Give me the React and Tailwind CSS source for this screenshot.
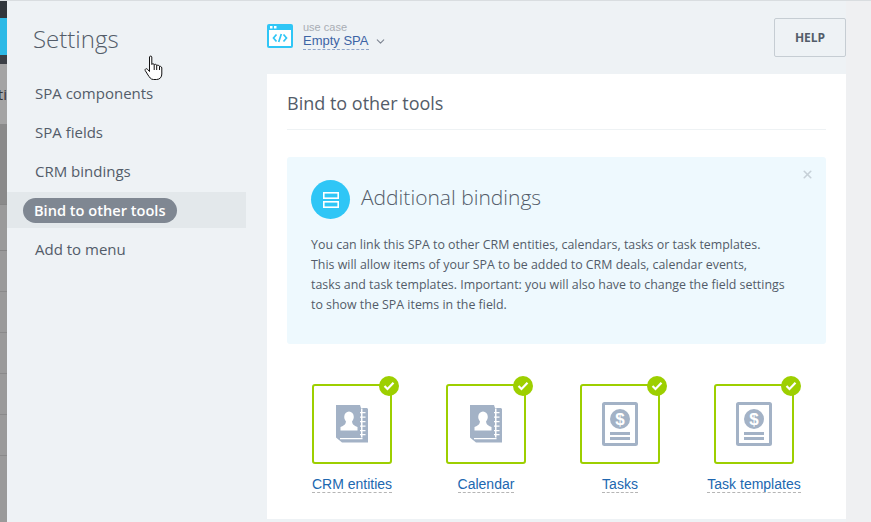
import { ChevronDown, X } from "lucide-react"

const menuItems = ["SPA components", "SPA fields", "CRM bindings", "Bind to other tools", "Add to menu"]

const tools = [
  { label: "CRM entities", icon: "book" },
  { label: "Calendar", icon: "book" },
  { label: "Tasks", icon: "invoice" },
  { label: "Task templates", icon: "invoice" },
]

function BookIcon() {
  return (
    <svg width="32" height="38" viewBox="0 0 32 38">
      <path d="M0 0H24L25 3H31L32 4V37.500H6L0 32.500Z" fill="#a3b2c6" />
      <path d="M25 3.500H26.500V32.500H25ZM4 33H26.500V34.200H4Z" fill="#fff" />
      <path d="M24 7H29.500V8.300H24ZM24 11.500H29.500V12.800H24ZM24 16H29.500V17.300H24ZM24 20.500H29.500V21.800H24ZM24 25H29.500V26.300H24ZM24 29H29.500V30.300H24Z" fill="#fff" />
      <ellipse cx="13" cy="12" rx="4.800" ry="5.500" fill="#fff" />
      <path d="M10 15.500C10 19.500 8 20.500 4.500 22V25.500H21.500V22C18 20.500 16 19.500 16 15.500Z" fill="#fff" />
    </svg>
  )
}

function InvoiceIcon() {
  return (
    <svg width="36" height="44" viewBox="0 0 36 44">
      <rect x="1.500" y="1.500" width="33" height="41" fill="#fff" stroke="#a3b2c6" strokeWidth="3" rx="1" />
      <circle cx="18" cy="17" r="10" fill="#a3b2c6" />
      <text x="18" y="23" textAnchor="middle" fontSize="17" fontWeight="700" fill="#fff" fontFamily="Liberation Sans, sans-serif">$</text>
      <rect x="8" y="30" width="20" height="3" fill="#a3b2c6" />
      <rect x="8" y="35" width="20" height="3" fill="#a3b2c6" />
    </svg>
  )
}

function HandCursor() {
  return (
    <svg className="absolute left-[144px] top-[55px]" width="20" height="26" viewBox="0 0 20 26">
      <path
        d="M5.500 2C5.500 .8 7.800 .8 7.800 2V9.500C7.800 8.500 10.200 8.500 10.200 9.800C10.200 9 12.700 9 12.700 10.500C12.700 10 15.500 10 15.500 11.500C15.500 11 17.800 11.300 17.800 13V19C17.800 22 16 24.500 12.500 24.500H9.500C6.500 24.500 5.500 22 4 20L1.200 15.500C.6 14 2.500 13 3.500 14.300L5.500 16.500Z"
        fill="#fff"
        stroke="#111"
        strokeWidth="1"
      />
      <path d="M10.200 10V15M12.700 10.500V15M15.500 11.500V15" stroke="#111" strokeWidth="1" />
    </svg>
  )
}

function ToolCard({ label, icon }) {
  return (
    <div className="flex w-[134px] flex-col items-center">
      <div className="relative flex h-[80px] w-[80px] items-center justify-center rounded-[3px] border-2 border-[#9dcf00]">
        {icon === "book" ? <BookIcon /> : <InvoiceIcon />}
        <div className="absolute -right-[9px] -top-[10px] flex h-[20px] w-[20px] items-center justify-center rounded-full bg-[#9dcf00]">
          <svg width="12" height="10" viewBox="0 0 12 10">
            <path d="M1.500 5L4.500 8L10.500 1.800" fill="none" stroke="#fff" strokeWidth="2.200" />
          </svg>
        </div>
      </div>
      <span className="mt-[12px] border-b border-dashed border-[#b5b5b5] text-[14px] leading-[16px] text-[#2067b0]">
        {label}
      </span>
    </div>
  )
}

export default function App() {
  return (
    <div className="relative flex h-[522px] w-[871px] flex-col overflow-hidden bg-[#eef2f5] font-['Liberation_Sans',sans-serif]">
      <div className="h-px bg-[#d9dde0]" />
      <div className="flex flex-1">
        {/* dimmed page behind the slider */}
        <div className="flex w-[7px] shrink-0 flex-col bg-[#9a9a9a]">
          <div className="h-[17px] bg-[#31363c]" />
          <div className="h-[37px] bg-[#2cb9e6]" />
          <div className="h-[9px] bg-[#3b3f45]" />
          <div className="flex h-[60px] items-center justify-end overflow-hidden bg-[#a4a4a4] font-['Open_Sans',sans-serif] text-[15px] text-[#333]">
            <span>ti</span>
          </div>
          <div className="h-[81px] border-b border-[#858585] bg-[#8a8a8a]" />
          <div className="h-[46px] border-b border-[#858585]" />
          <div className="h-[41px] border-b border-[#8a8a8a]" />
          <div className="h-[41px] border-b border-[#8a8a8a]" />
          <div className="h-[41px] border-b border-[#8a8a8a]" />
          <div className="h-[41px] border-b border-[#8a8a8a]" />
          <div className="h-[41px] border-b border-[#8a8a8a]" />
        </div>

        <aside className="w-[239px] shrink-0 font-['Open_Sans',sans-serif]">
          <h1 className="pl-[26px] pt-[21px] text-[24px] font-light leading-[34px] text-[#535c69]">Settings</h1>
          <nav className="mt-[18px] flex flex-col">
            {menuItems.map((item) =>
              item === "Bind to other tools" ? (
                <div key={item} className="mt-px flex h-[36px] items-center bg-[#e3e8eb] pl-[16px]">
                  <span className="rounded-full bg-[#7f8792] px-[11px] text-[14.600px] font-semibold leading-[25px] text-white">
                    {item}
                  </span>
                </div>
              ) : (
                <div key={item} className="flex h-[39px] items-center pl-[28px] text-[15px] text-[#535c69] last:pt-[3px]">
                  {item}
                </div>
              ),
            )}
          </nav>
        </aside>

        <main className="w-[600px] shrink-0 pl-[21px]">
          <header className="flex h-[73px] items-start justify-between">
            <div className="flex items-center pt-[21px]">
              <svg width="26" height="24" viewBox="0 0 26 24">
                <rect width="26" height="24" rx="2" fill="#2fc6f6" />
                <rect x="2" y="6" width="22" height="16" fill="#fff" />
                <rect x="3" y="2" width="2.500" height="2.500" fill="#fff" />
                <rect x="7" y="2" width="2.500" height="2.500" fill="#fff" />
                <path d="M9.500 10.500L6.500 14L9.500 17.500M16.500 10.500L19.500 14L16.500 17.500M14.300 10L11.700 18" fill="none" stroke="#2fc6f6" strokeWidth="1.700" />
              </svg>
              <div className="ml-[10px]">
                <div className="text-[11px] leading-[11px] text-[#a8adb4]">use case</div>
                <div className="flex items-center">
                  <span className="border-b border-dashed border-[#8fa5c9] text-[13px] leading-[16px] text-[#3d64a5]">
                    Empty SPA
                  </span>
                  <ChevronDown size={13} className="ml-[5px] text-[#7d8591]" />
                </div>
              </div>
            </div>
            <button className="mt-[17px] h-[39px] w-[72px] rounded-[2px] border border-[#c6cdd3] font-['Open_Sans',sans-serif] text-[12px] font-bold text-[#535c69]">
              HELP
            </button>
          </header>

          <section className="h-[445px] w-[579px] bg-white px-[20px]">
            <h2 className="flex h-[56px] items-center border-b border-[#eef2f4] pt-[3px] font-['Open_Sans',sans-serif] text-[18px] text-[#535c69]">
              Bind to other tools
            </h2>
            <div className="relative mt-[27px] h-[187px] rounded-[3px] bg-[#eef9fe] px-[24px] pt-[23px]">
              <X size={13} strokeWidth={3} className="absolute right-[12px] top-[11px] text-[#c6d0d8]" />
              <div className="flex items-center">
                <div className="flex h-[39px] w-[39px] items-center justify-center rounded-full bg-[#2fc6f6]">
                  <svg width="16" height="16" viewBox="0 0 16 16" fill="none" stroke="#fff" strokeWidth="1.600">
                    <rect x=".8" y=".8" width="14.400" height="5.400" />
                    <rect x=".8" y="9.800" width="14.400" height="5.400" />
                  </svg>
                </div>
                <div className="-mt-[3px] ml-[11px] font-['Open_Sans',sans-serif] text-[21px] font-light text-[#535c69]">
                  Additional bindings
                </div>
              </div>
              <p className="mt-[16px] w-[490px] font-['Open_Sans',sans-serif] text-[12.400px] leading-[20px] text-[#535c69]">
                You can link this SPA to other CRM entities, calendars, tasks or task templates.
                <br />
                This will allow items of your SPA to be added to CRM deals, calendar events,
                <br />
                tasks and task templates. Important: you will also have to change the field settings
                <br />
                to show the SPA items in the field.
              </p>
            </div>
            <div className="-ml-[2px] mt-[40px] flex">
              {tools.map((tool) => (
                <ToolCard key={tool.label} {...tool} />
              ))}
            </div>
          </section>
        </main>

        <div className="flex-1 bg-[#eff0f2]" />
      </div>
      <HandCursor />
    </div>
  )
}
